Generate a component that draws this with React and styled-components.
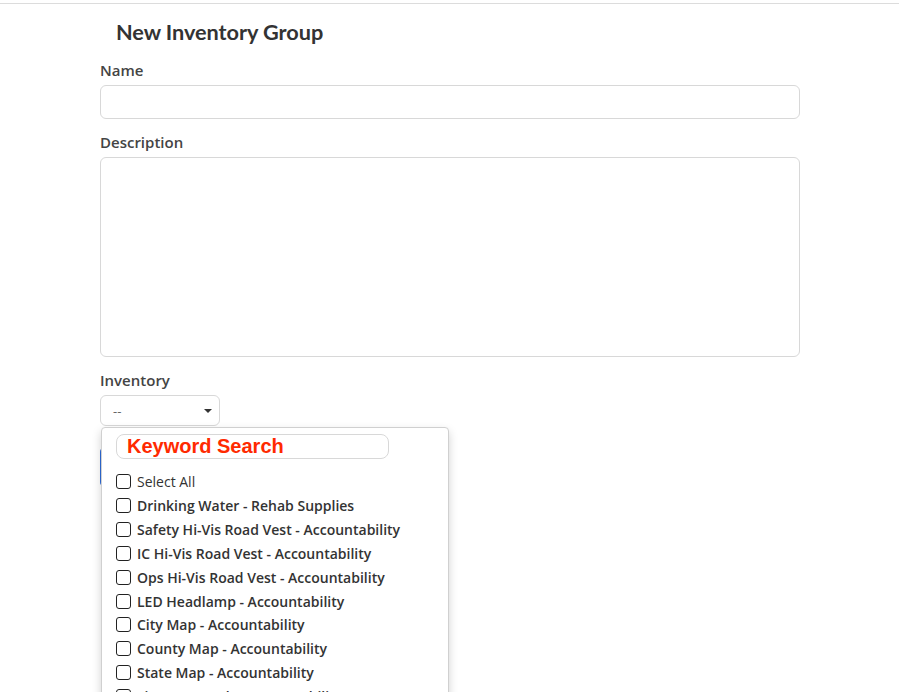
import React from 'react'
import styled, { createGlobalStyle } from 'styled-components'

const GlobalStyle = createGlobalStyle`
  body {
    margin: 0;
    background: #fff;
    font-family: 'Open Sans', 'Noto Sans', sans-serif;
    color: #333;
  }
`

const Shell = styled.div`
  height: 692px;
  overflow: hidden;
`

const TopRule = styled.div`
  margin-top: 3px;
  height: 1px;
  background: #dcdcdc;
`

const Page = styled.div`
  width: 700px;
  margin-left: 100px;
`

const Title = styled.h2`
  font-family: 'Lato', sans-serif;
  font-weight: 700;
  font-size: 21.7px;
  line-height: 24px;
  color: #333;
  margin: 16px 0 0 16px;
  letter-spacing: -0.05px;
`

const Field = styled.div`
  margin-top: ${({ top }) => top || '13px'};
`

const Label = styled.label`
  display: block;
  font-size: 15px;
  font-weight: 600;
  line-height: 20px;
  color: #444;
  margin-bottom: 5px;
`

const TextInput = styled.input`
  display: block;
  box-sizing: border-box;
  width: 100%;
  height: 34px;
  border: 1px solid #d8d8d8;
  border-radius: 6px;
  outline: none;
`

const TextArea = styled.textarea`
  display: block;
  box-sizing: border-box;
  width: 100%;
  height: 200px;
  border: 1px solid #d8d8d8;
  border-radius: 6px;
  resize: none;
  outline: none;
`

const SelectWrap = styled.div`
  position: relative;
`

const SelectButton = styled.div`
  box-sizing: border-box;
  width: 120px;
  height: 31px;
  border: 1px solid #d8d8d8;
  border-radius: 6px;
  display: flex;
  align-items: center;
  justify-content: space-between;
  padding: 0 7px 0 12px;
  font-size: 13px;
  color: #666;
`

const Caret = styled.span`
  width: 0;
  height: 0;
  border-left: 4px solid transparent;
  border-right: 4px solid transparent;
  border-top: 4px solid #333;
`

const SaveButton = styled.div`
  margin-top: 22px;
  width: 90px;
  height: 38px;
  background: #2e6bd8;
  border-radius: 4px;
`

const Menu = styled.div`
  position: absolute;
  top: 32px;
  left: 1px;
  box-sizing: border-box;
  width: 348px;
  height: 300px;
  background: #fff;
  border: 1px solid #d0d0d0;
  border-radius: 4px;
  box-shadow: 0 4px 10px rgba(0, 0, 0, 0.18);
  padding: 6px 0 0 14px;
  overflow: hidden;
`

const Search = styled.input`
  display: block;
  box-sizing: border-box;
  width: 273px;
  height: 25px;
  border: 1px solid #d8d8d8;
  border-radius: 8px;
  padding: 0 10px;
  font-family: 'Liberation Sans', Arial, sans-serif;
  font-weight: 700;
  font-size: 20px;
  outline: none;

  &::placeholder {
    color: #ff2a00;
    opacity: 1;
  }
`

const List = styled.ul`
  list-style: none;
  margin: 11px 0 0 0;
  padding: 0;
`

const Item = styled.li`
  display: flex;
  align-items: center;
  gap: 6px;
  height: 23.85px;
  font-size: 14px;
  font-weight: ${({ plain }) => (plain ? 400 : 600)};
  color: #333;
  white-space: nowrap;
`

const Box = styled.span`
  box-sizing: border-box;
  width: 15px;
  height: 15px;
  border: 1.5px solid #222;
  border-radius: 3px;
  flex-shrink: 0;
`

const items = [
  'Drinking Water - Rehab Supplies',
  'Safety Hi-Vis Road Vest - Accountability',
  'IC Hi-Vis Road Vest - Accountability',
  'Ops Hi-Vis Road Vest - Accountability',
  'LED Headlamp - Accountability',
  'City Map - Accountability',
  'County Map - Accountability',
  'State Map - Accountability',
  'Fire Map Book - Accountability',
]

const App = () => (
  <Shell>
    <GlobalStyle />
    <TopRule />
    <Page>
      <Title>New Inventory Group</Title>
      <Field top='16px'>
        <Label>Name</Label>
        <TextInput />
      </Field>
      <Field>
        <Label>Description</Label>
        <TextArea />
      </Field>
      <Field>
        <Label>Inventory</Label>
        <SelectWrap>
          <SelectButton>
            <span>--</span>
            <Caret />
          </SelectButton>
          <SaveButton />
          <Menu>
            <Search placeholder='Keyword Search' />
            <List>
              <Item plain>
                <Box />
                Select All
              </Item>
              {items.map((name) => (
                <Item key={name}>
                  <Box />
                  {name}
                </Item>
              ))}
            </List>
          </Menu>
        </SelectWrap>
      </Field>
    </Page>
  </Shell>
)

export default App
